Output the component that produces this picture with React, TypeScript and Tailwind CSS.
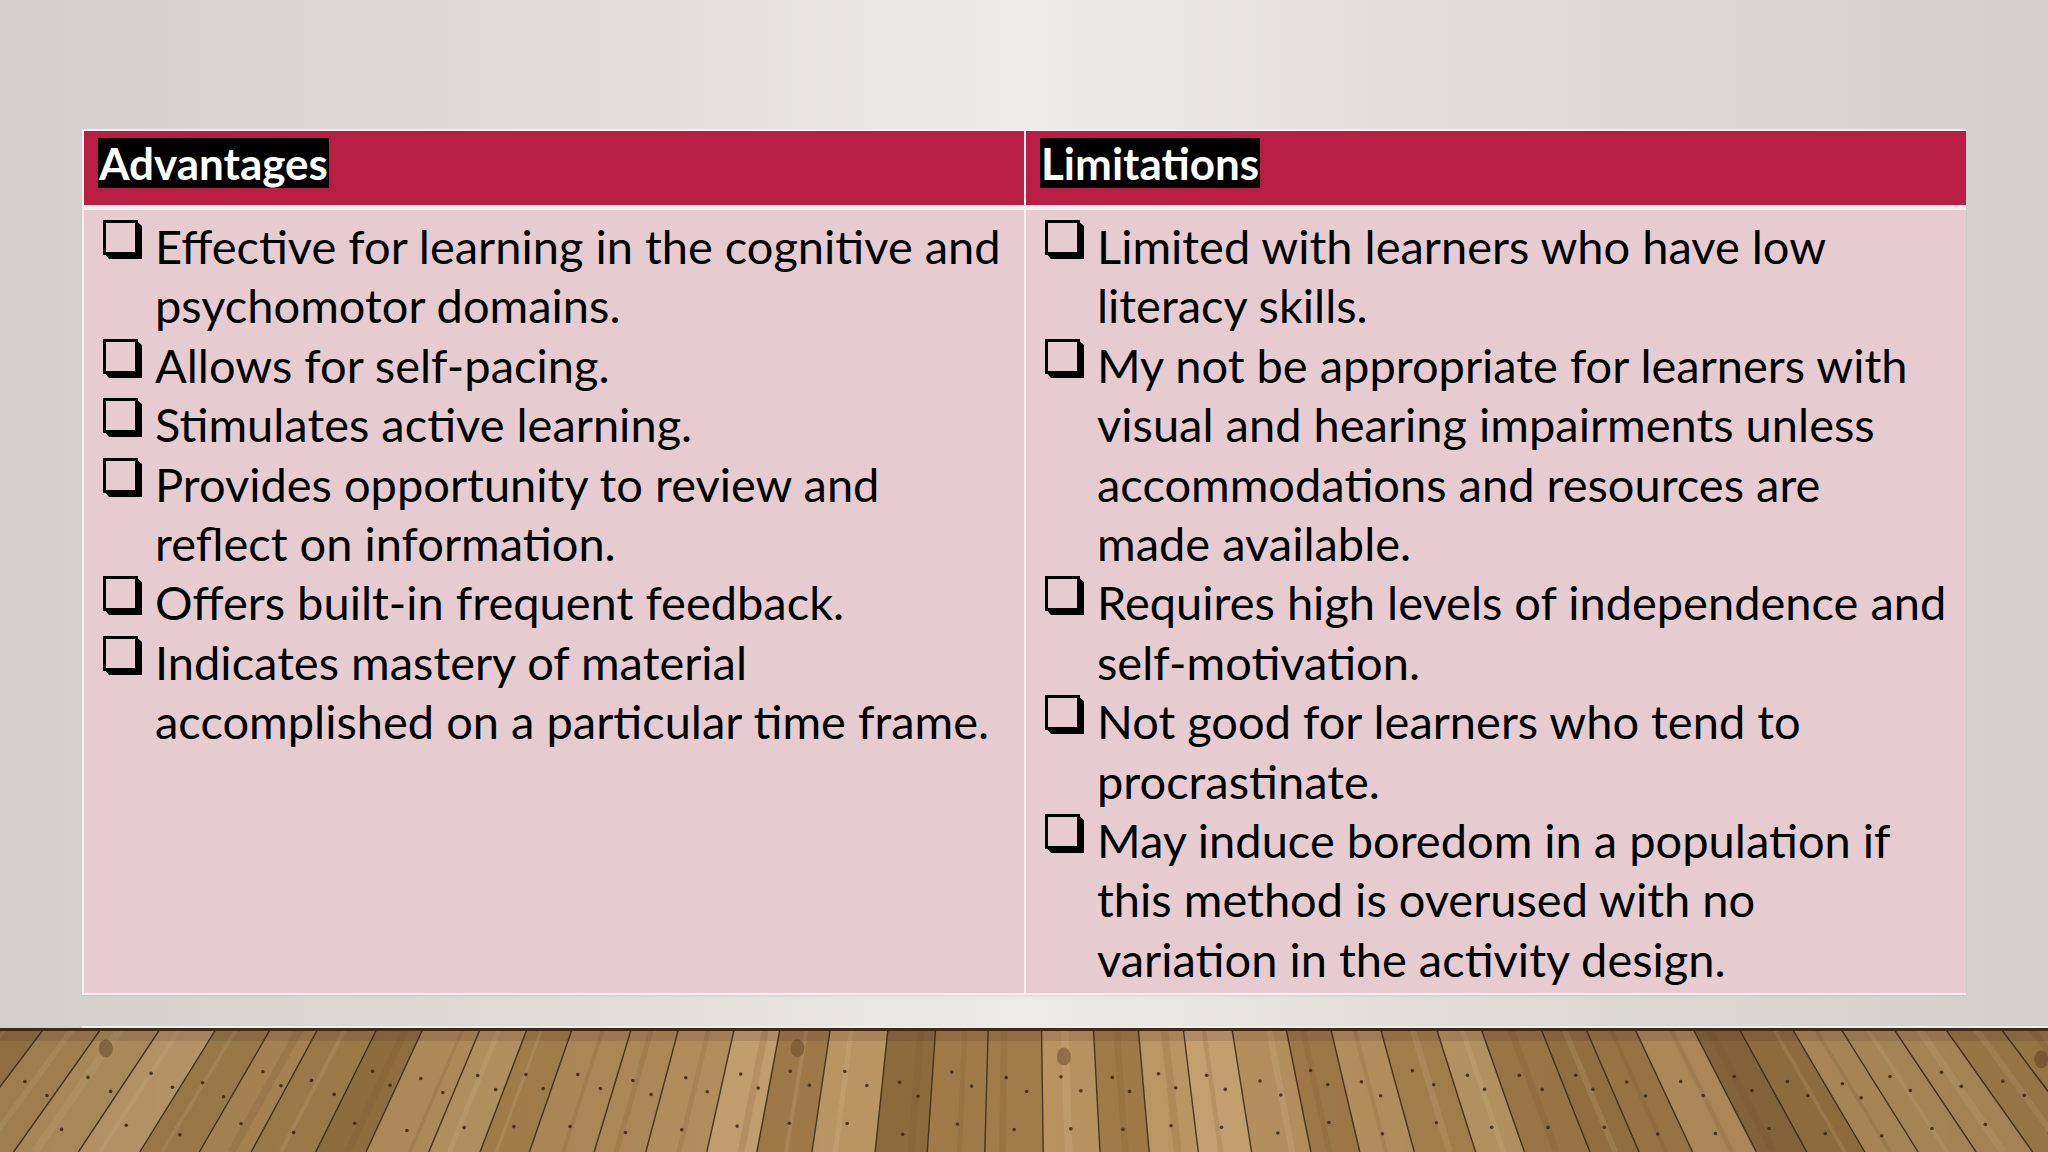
import React from "react";

const advantages: string[][] = [
  ["Effective for learning in the cognitive and", "psychomotor domains."],
  ["Allows for self-pacing."],
  ["Stimulates active learning."],
  ["Provides opportunity to review and", "reflect on information."],
  ["Offers built-in frequent feedback."],
  ["Indicates mastery of material", "accomplished on a particular time frame."],
];

const limitations: string[][] = [
  ["Limited with learners who have low", "literacy skills."],
  [
    "My not be appropriate for learners with",
    "visual and hearing impairments unless",
    "accommodations and resources are",
    "made available.",
  ],
  ["Requires high levels of independence and", "self-motivation."],
  ["Not good for learners who tend to", "procrastinate."],
  [
    "May induce boredom in a population if",
    "this method is overused with no",
    "variation in the activity design.",
  ],
];

function ShadowBox() {
  return (
    <svg width="40" height="40" viewBox="0 0 40 40" className="shrink-0">
      <rect x="1.5" y="1.5" width="32" height="32" fill="none" stroke="#000" strokeWidth="3" />
      <polygon points="33,1 39,6 39,39 6,39 1,33 33,33" fill="#000" />
    </svg>
  );
}

function BulletList({ items }: { items: string[][] }) {
  return (
    <div className="flex flex-col">
      {items.map((lines, i) => (
        <div key={i} className="flex items-start">
          <div className="w-[52px] pt-[3px] shrink-0">
            <ShadowBox />
          </div>
          <div className="flex flex-col">
            {lines.map((l, j) => (
              <span key={j} className="whitespace-nowrap leading-[59.4px]">
                {l}
              </span>
            ))}
          </div>
        </div>
      ))}
    </div>
  );
}

// seeded random so the floor comes out the same every run
function rand(seed: number) {
  const x = Math.sin(seed * 127.1 + 311.7) * 43758.5453;
  return x - Math.floor(x);
}

function Floor() {
  const H = 124;
  const vy = 1300;
  const tones = ["#a9834f", "#bd9866", "#9b7545", "#b48d5b", "#c7a273", "#a27b4a", "#8f6b3f", "#b99261"];
  const xs: number[] = [];
  let x = -340;
  let s = 1;
  while (x < 2400) {
    xs.push(x);
    x += 44 + rand(s++) * 16;
  }
  const spread = (x0: number) => x0 + ((x0 - 1024) * H) / vy;
  const at = (x0: number, y: number) => x0 + ((x0 - 1024) * y) / vy;
  return (
    <svg width="2048" height={H} viewBox={`0 0 2048 ${H}`} className="block">
      <defs>
        <linearGradient id="fshade" x1="0" y1="0" x2="1" y2="0">
          <stop offset="0" stopColor="#000" stopOpacity="0.12" />
          <stop offset="0.5" stopColor="#000" stopOpacity="0" />
          <stop offset="1" stopColor="#000" stopOpacity="0.12" />
        </linearGradient>
      </defs>
      <rect width="2048" height={H} fill="#a98350" />
      {xs.slice(0, -1).map((x0, i) => {
        const x1 = xs[i + 1];
        const fill = tones[Math.floor(rand(i + 40) * tones.length)];
        return (
          <polygon
            key={i}
            points={`${x0},0 ${x1},0 ${spread(x1)},${H} ${spread(x0)},${H}`}
            fill={fill}
          />
        );
      })}
      {xs.slice(0, -1).map((x0, i) => {
        const x1 = xs[i + 1];
        const m = x0 + (x1 - x0) * (0.3 + rand(i + 500) * 0.4);
        return (
          <line
            key={"g" + i}
            x1={m}
            y1={0}
            x2={spread(m)}
            y2={H}
            stroke={rand(i + 600) > 0.5 ? "#e2c79c" : "#7d5a30"}
            strokeWidth={3 + rand(i + 700) * 5}
            opacity="0.18"
          />
        );
      })}
      {xs.map((x0, i) => (
        <line
          key={"l" + i}
          x1={x0}
          y1={0}
          x2={spread(x0)}
          y2={H}
          stroke="#3a2814"
          strokeWidth="1.4"
          opacity="0.85"
        />
      ))}
      {xs.slice(0, -1).map((x0, i) => {
        const x1 = xs[i + 1];
        const y1 = 42 + rand(i + 90) * 14;
        const a = at(x0, y1);
        const b = at(x1, y1);
        const y2 = y1 + 52;
        const c = at(x0, y2);
        const d = at(x1, y2);
        return (
          <g key={"n" + i} fill="#3b2914" opacity="0.85">
            <circle cx={a + (b - a) * 0.35} cy={y1} r="1.8" />
            <circle cx={a + (b - a) * 0.72} cy={y1 + 14} r="1.8" />
            <circle cx={c + (d - c) * 0.5} cy={y2} r="1.8" />
          </g>
        );
      })}
      {xs.slice(0, -1).map((x0, i) =>
        rand(i + 200) > 0.86 ? (
          <ellipse
            key={"k" + i}
            cx={at(x0, 25) + 22}
            cy={18 + rand(i + 300) * 14}
            rx="7"
            ry="9"
            fill="#6e4d28"
            opacity="0.55"
          />
        ) : null
      )}
      <rect width="2048" height={H} fill="url(#fshade)" />
      <rect width="2048" height="3" fill="#3d2b18" />
      <rect y="3" width="2048" height="10" fill="#1e1206" opacity="0.12" />
    </svg>
  );
}

export default function App() {
  return (
    <div className="w-[2048px] h-[1152px] overflow-hidden flex flex-col font-['Lato',_'Liberation_Sans',_sans-serif] text-black">
      <div className="h-[1028px] bg-[linear-gradient(to_right,#d3cfcb_0%,#dedad6_25%,#ecebe7_50%,#dedad6_75%,#d3cfcb_100%)] pt-[129px] pl-[82px] flex flex-col">
        <div className="w-[1884px] h-[866px] bg-[#f6eef0] p-[2px] grid grid-cols-[940px_940px] grid-rows-[74px_1fr] gap-x-[2px] gap-y-[5px] shadow-[0_1px_2px_rgba(0,0,0,0.08)]">
          <div className="bg-[#b81e44] pl-[14px] pt-[7px]">
            <span className="bg-black text-white font-bold text-[44px] leading-[50px] inline-block px-[1px]">
              Advantages
            </span>
          </div>
          <div className="bg-[#b81e44] pl-[14px] pt-[7px]">
            <span className="bg-black text-white font-bold text-[44px] leading-[50px] inline-block px-[1px]">
              Limitations
            </span>
          </div>
          <div className="bg-[#e6ccd1] pl-[19px] pt-[7px] text-[47px]">
            <BulletList items={advantages} />
          </div>
          <div className="bg-[#e6ccd1] pl-[19px] pt-[7px] text-[47px]">
            <BulletList items={limitations} />
          </div>
        </div>
        <div className="flex-1" />
        <div className="h-[2px] bg-[#efede8]" />
      </div>
      <Floor />
    </div>
  );
}
